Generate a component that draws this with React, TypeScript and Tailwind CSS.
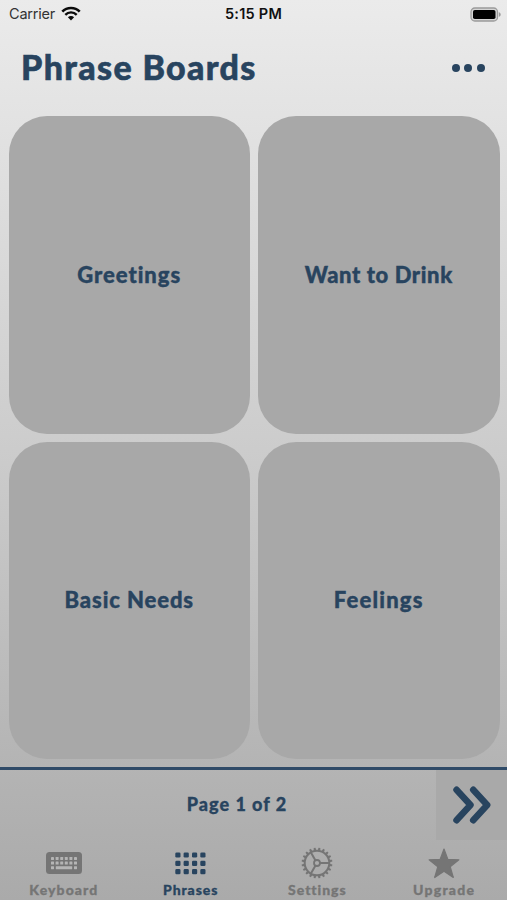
import React from 'react'
import { clsx } from 'clsx'

const boards = [
  { name: 'Greetings', spacing: 'tracking-[0.95px]' },
  { name: 'Want to Drink', spacing: 'tracking-[0.6px]' },
  { name: 'Basic Needs', spacing: 'tracking-[0.9px]' },
  { name: 'Feelings', spacing: 'tracking-[1.2px]' },
]

const WifiIcon: React.FC = () => (
  <svg viewBox="0 0 20 15" className="h-[15px] w-5" fill="none" aria-hidden="true">
    <path d="M1.3 5.6a12.3 12.3 0 0 1 17.4 0" stroke="#0b0b0b" strokeWidth="2.7" />
    <path d="M4.3 8.8a8 8 0 0 1 11.4 0" stroke="#0b0b0b" strokeWidth="2.4" />
    <path d="M10 14.4 6.9 11.2a4.4 4.4 0 0 1 6.2 0z" fill="#0b0b0b" />
  </svg>
)

const BatteryIcon: React.FC = () => (
  <svg viewBox="0 0 31 15" className="h-[15px] w-[31px]" aria-hidden="true">
    <rect x="1" y="1" width="26.5" height="13" rx="3.8" fill="#d4d4d4" stroke="#9b9b9b" strokeWidth="1.3" />
    <rect x="3" y="3" width="22.5" height="9" rx="1.8" fill="#000" />
    <path d="M28.8 5.2c1.3.4 1.9 1.2 1.9 2.3s-.6 1.9-1.9 2.3z" fill="#9b9b9b" />
  </svg>
)

const KeyboardIcon: React.FC = () => (
  <svg viewBox="0 0 36 22" className="ml-px h-[22px] w-9" aria-hidden="true">
    <rect width="36" height="22" rx="3.5" fill="currentColor" />
    <g fill="#b5b5b5">
      {[5, 9.6].map((y) =>
        [5, 9.6, 14.2, 18.8, 23.4, 28].map((x) => (
          <rect key={`${x}-${y}`} x={x} y={y} width="3" height="3" rx="0.4" />
        )),
      )}
      <rect x="5" y="14.2" width="3" height="3" rx="0.4" />
      <rect x="9.8" y="14.2" width="16.4" height="3" rx="0.4" />
      <rect x="28" y="14.2" width="3" height="3" rx="0.4" />
    </g>
  </svg>
)

const GridIcon: React.FC = () => (
  <svg viewBox="0 0 31 23" className="h-[23px] w-[31px]" fill="currentColor" aria-hidden="true">
    {[0.4, 8.8, 17.1].map((y) =>
      [0.3, 8.6, 17, 25.3].map((x) => (
        <rect key={`${x}-${y}`} x={x} y={y} width="5.2" height="5.2" rx="1.3" />
      )),
    )}
  </svg>
)

const GearIcon: React.FC = () => (
  <svg viewBox="-16 -16 32 32" className="size-8" fill="none" stroke="currentColor" aria-hidden="true">
    <circle r="12.3" strokeWidth="2" />
    <circle r="3" strokeWidth="1.8" />
    {Array.from({ length: 20 }, (_, i) => (
      <path key={i} d="M-1.3-12.8-.9-15.4H.9l.4 2.6z" fill="currentColor" stroke="none" transform={`rotate(${i * 18 + 9})`} />
    ))}
    {[0, 120, 240].map((angle) => (
      <path key={angle} d="M3 0h9.5" strokeWidth="2" transform={`rotate(${angle})`} />
    ))}
  </svg>
)

const StarIcon: React.FC = () => (
  <svg viewBox="0 0 32 31" className="h-[31px] w-8" aria-hidden="true">
    <path
      d="M16 1 19.9 11.4 30.9 11.8 22.2 18.7 25.3 29.5 16 23.2 6.7 29.5 9.8 18.7 1.1 11.8 12.1 11.4z"
      fill="currentColor"
      stroke="currentColor"
      strokeWidth="1.2"
      strokeLinejoin="round"
    />
  </svg>
)

const tabs = [
  { label: 'Keyboard', icon: KeyboardIcon, spacing: 'tracking-[1.1px]' },
  { label: 'Phrases', icon: GridIcon, spacing: 'tracking-[0.9px]' },
  { label: 'Settings', icon: GearIcon, spacing: 'tracking-[0.95px]' },
  { label: 'Upgrade', icon: StarIcon, spacing: 'tracking-[1.25px]' },
]

export default function App() {
  return (
    <div className="flex h-[900px] w-[507px] flex-col overflow-hidden bg-linear-to-b from-[#ebebeb] via-[#cccccc] to-[#aaaaaa] font-['Lato',sans-serif] text-[#28445f]">
      {/* Status bar */}
      <div className="grid h-7 grid-cols-3 items-center pr-[6px] pl-[9px] font-['Inter',sans-serif] text-sm text-[#111]">
        <div className="flex items-center gap-[6px]">
          <span className="text-[14.5px] tracking-[-0.2px] text-[#333]">Carrier</span>
          <WifiIcon />
        </div>
        <span className="pr-[3px] text-center text-[14.5px] font-semibold tracking-[0.25px]">5:15 PM</span>
        <div className="flex justify-end">
          <BatteryIcon />
        </div>
      </div>

      {/* Title */}
      <header className="flex h-[88px] items-start justify-between pr-[22px] pl-[21px]">
        <h1 className="pt-[18px] text-[34px] leading-[42px] font-black tracking-[1.35px] whitespace-nowrap [-webkit-text-stroke:0.6px]">
          Phrase Boards
        </h1>
        <button type="button" aria-label="More options" className="mt-9 flex gap-[4.6px]">
          <span className="size-2 rounded-full bg-current" />
          <span className="size-2 rounded-full bg-current" />
          <span className="size-2 rounded-full bg-current" />
        </button>
      </header>

      {/* Boards */}
      <main className="grid h-[643px] shrink-0 grid-cols-2 grid-rows-2 gap-2 pr-[7.5px] pl-[8.5px]">
        {boards.map(({ name, spacing }) => (
          <button
            key={name}
            type="button"
            className={clsx(
              'rounded-[38px] bg-[#a8a8a8] text-[22px] leading-7 font-black whitespace-nowrap [-webkit-text-stroke:0.4px]',
              spacing,
            )}
          >
            {name}
          </button>
        ))}
      </main>

      {/* Pager */}
      <div className="mt-2 flex h-[73px] shrink-0 border-t-[3px] border-[#304b68]">
        <div className="w-[38px]" />
        <div className="flex flex-1 items-center justify-center pb-[2px] text-lg font-black tracking-[1px] [-webkit-text-stroke:0.3px]">
          Page 1 of 2
        </div>
        <button type="button" aria-label="Next page" className="flex w-[71px] items-center justify-center bg-[#a9a9a9]">
          <svg viewBox="0 0 40 40" className="size-10" fill="none" stroke="currentColor" strokeWidth="6.5" strokeLinecap="round" strokeLinejoin="round">
            <path d="m4.5 4.8 14 15.2-14 15.2M21.2 4.8l14 15.2-14 15.2" />
          </svg>
        </button>
      </div>

      {/* Tab bar */}
      <nav className="flex h-[60px] shrink-0">
        {tabs.map(({ label, icon: Icon, spacing }) => (
          <button
            key={label}
            type="button"
            className={clsx(
              'flex flex-1 flex-col items-center',
              label === 'Phrases' ? 'text-[#28445f]' : 'text-[#757575]',
            )}
          >
            <span className="flex h-[42px] items-center pt-1">
              <Icon />
            </span>
            <span className={clsx('pl-px text-[14px] leading-4 font-black [-webkit-text-stroke:0.3px]', spacing)}>{label}</span>
          </button>
        ))}
      </nav>
    </div>
  )
}
